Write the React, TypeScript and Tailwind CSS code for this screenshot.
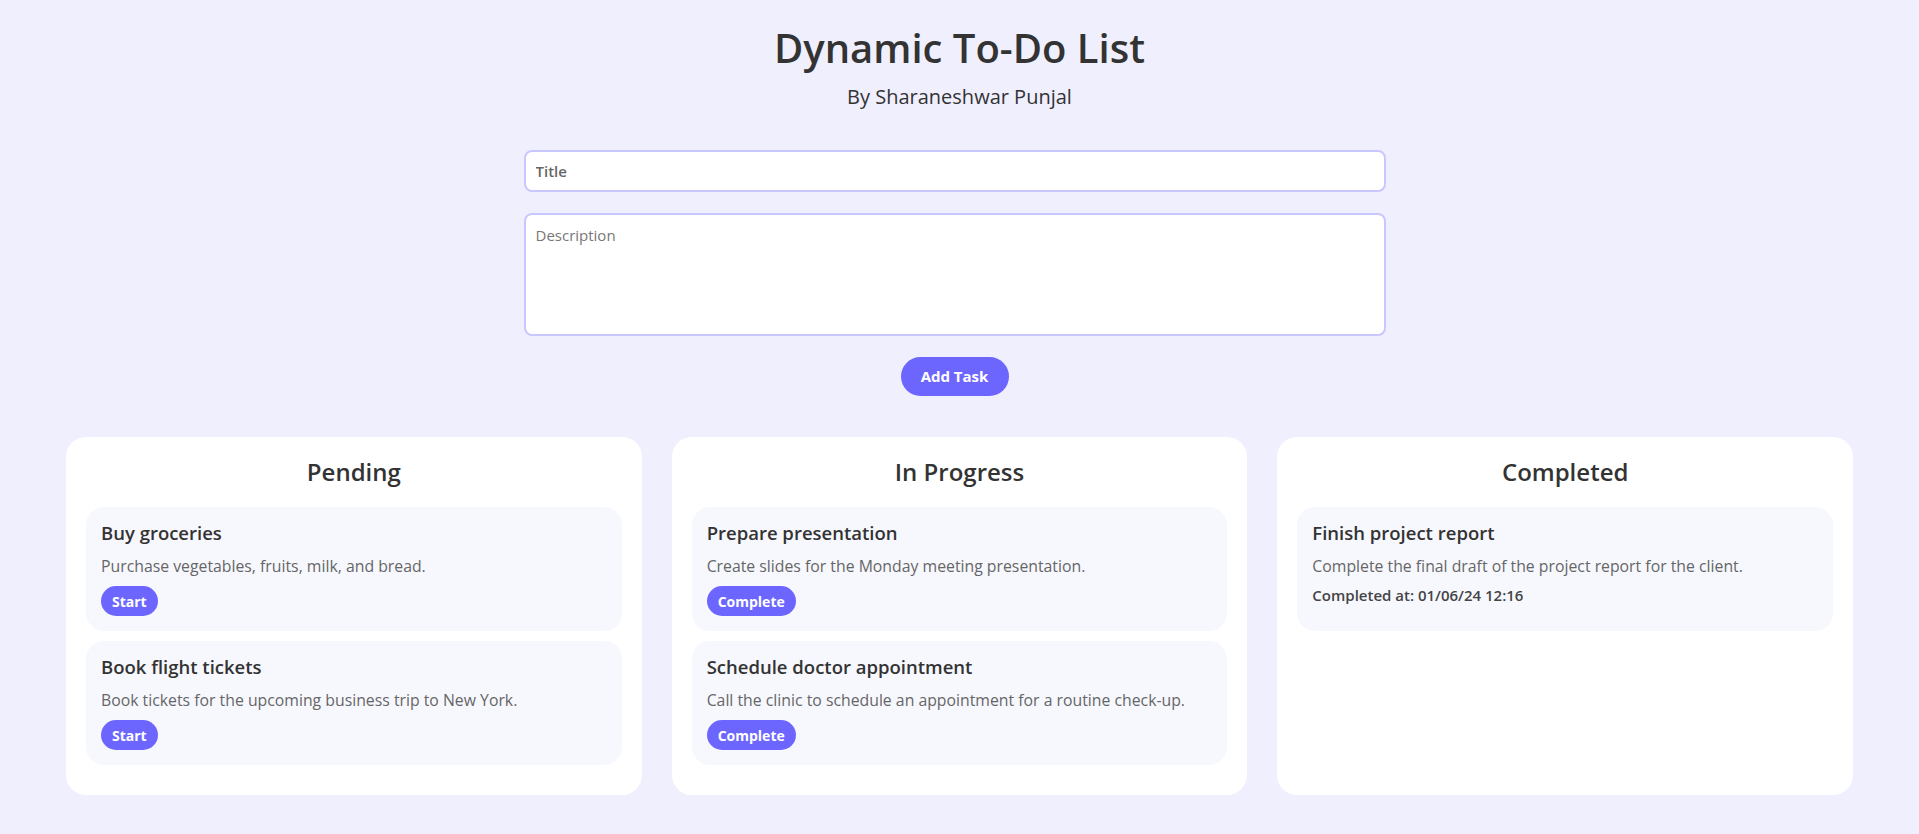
import { useState } from "react";

type Task = { id: number; title: string; desc: string; completedAt?: string };

const PENDING: Task[] = [
  { id: 1, title: "Buy groceries", desc: "Purchase vegetables, fruits, milk, and bread." },
  { id: 2, title: "Book flight tickets", desc: "Book tickets for the upcoming business trip to New York." },
];

const IN_PROGRESS: Task[] = [
  { id: 3, title: "Prepare presentation", desc: "Create slides for the Monday meeting presentation." },
  { id: 4, title: "Schedule doctor appointment", desc: "Call the clinic to schedule an appointment for a routine check-up." },
];

const COMPLETED: Task[] = [
  {
    id: 5,
    title: "Finish project report",
    desc: "Complete the final draft of the project report for the client.",
    completedAt: "01/06/24 12:16",
  },
];

function TaskCard({ task, action }: { task: Task; action?: string }) {
  return (
    <div className="bg-[#f7f8fe] rounded-[18px] px-[15px] pt-[15px] pb-[15px] mb-[10px]">
      <h3 className="text-[18.5px] leading-[22px] font-semibold text-[#333]">{task.title}</h3>
      <p className="mt-[12px] text-[15.8px] leading-[20px] text-[#666]">{task.desc}</p>
      {action && (
        <button className="mt-[10px] h-[30px] px-[11px] rounded-full bg-[#6c66ff] text-white text-[14px] font-bold">
          {action}
        </button>
      )}
      {task.completedAt && (
        <p className="mt-[9px] mb-[11px] text-[15px] leading-[20px] font-semibold text-[#444]">
          Completed at: {task.completedAt}
        </p>
      )}
    </div>
  );
}

function Column({ name, tasks, action }: { name: string; tasks: Task[]; action?: string }) {
  return (
    <div className="bg-white rounded-[20px] p-[20px]">
      <h2 className="text-center text-[24px] leading-[29px] font-semibold text-[#333] mb-[21px]">{name}</h2>
      {tasks.map(t => (
        <TaskCard key={t.id} task={t} action={action} />
      ))}
    </div>
  );
}

export default function App() {
  const [title, setTitle] = useState("");
  const [desc, setDesc] = useState("");

  return (
    <div className="min-h-screen bg-[#f0effe] text-[#333] font-['Open_Sans','Lato',sans-serif] pb-[39px]">
      <header className="text-center pt-[24px]">
        <h1 className="text-[40px] leading-[48px] font-semibold text-[#333]">Dynamic To-Do List</h1>
        <p className="mt-[13px] text-[20px] leading-[24px] text-[#333]">By Sharaneshwar Punjal</p>
      </header>

      {/* task form */}
      <div className="w-[872px] mx-auto mt-[41px] pr-[10px] flex flex-col items-center">
        <input
          value={title}
          onChange={e => setTitle(e.target.value)}
          placeholder="Title"
          className="w-full h-[42px] bg-white border-2 border-[#c9c7ff] rounded-[8px] px-[10px] text-[15px] outline-none placeholder:text-[#666] placeholder:font-semibold"
        />
        <textarea
          value={desc}
          onChange={e => setDesc(e.target.value)}
          placeholder="Description"
          className="w-full h-[123px] mt-[21px] bg-white border-2 border-[#c9c7ff] rounded-[8px] px-[10px] py-[8px] text-[15px] leading-[24px] outline-none resize-none placeholder:text-[#777]"
        />
        <button className="mt-[21px] h-[39px] w-[108px] rounded-full bg-[#6c66ff] text-white text-[15px] font-bold">
          Add Task
        </button>
      </div>

      <div className="grid grid-cols-3 gap-[30px] px-[66px] mt-[41px]">
        <Column name="Pending" tasks={PENDING} action="Start" />
        <Column name="In Progress" tasks={IN_PROGRESS} action="Complete" />
        <Column name="Completed" tasks={COMPLETED} />
      </div>
    </div>
  );
}
